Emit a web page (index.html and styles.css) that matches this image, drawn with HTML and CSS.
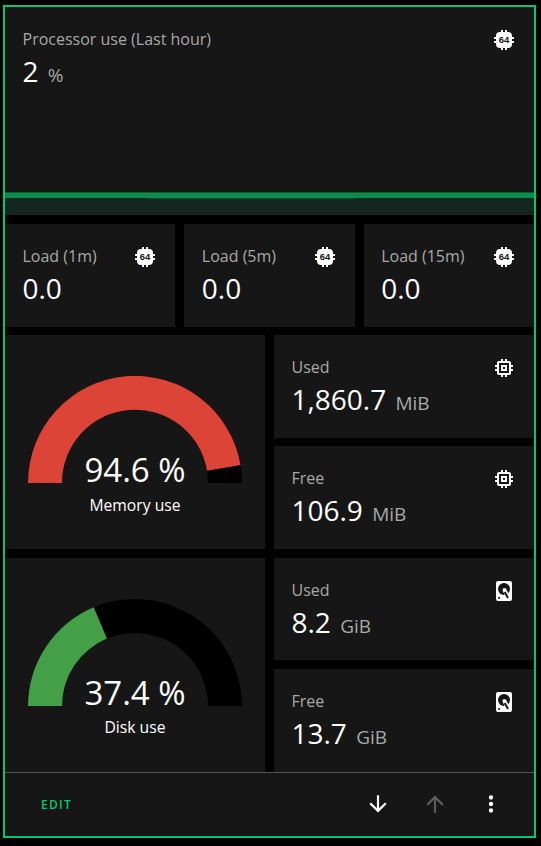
FILE: index.html
```html
<!DOCTYPE html>
<html>
<head>
  <meta charset="utf-8">
  <title>System monitor</title>
  <link rel="stylesheet" href="styles.css">
</head>
<body>
  <svg class="defs" width="0" height="0">
    <symbol id="i-memory" viewBox="0 0 24 24"><path d="M17,17H7V7H17M21,11V9H19V7C19,5.89 18.1,5 17,5H15V3H13V5H11V3H9V5H7C5.89,5 5,5.89 5,7V9H3V11H5V13H3V15H5V17A2,2 0 0,0 7,19H9V21H11V19H13V21H15V19H17A2,2 0 0,0 19,17V15H21V13H19V11M13,13H11V11H13M15,9H9V15H15V9Z"/></symbol>
    <symbol id="i-disk" viewBox="0 0 24 24">
      <path d="M6,2H18A2,2 0 0,1 20,4V20A2,2 0 0,1 18,22H6A2,2 0 0,1 4,20V4A2,2 0 0,1 6,2Z"/>
      <circle class="disk-dark" cx="12" cy="10" r="6"/>
      <path class="disk-notch" d="M12,10L16.3,19"/>
      <path class="disk-arm" d="M12.7,13L16,19"/>
      <circle cx="12" cy="10" r="1"/>
      <circle class="disk-dark" cx="7" cy="19" r="1"/>
    </symbol>
    <symbol id="i-cpu" viewBox="0 0 24 24"><path d="M9,2H11V4H13V2H15V4H16A4,4 0 0,1 20,8V9H22V11H20V13H22V15H20V16A4,4 0 0,1 16,20H15V22H13V20H11V22H9V20H8A4,4 0 0,1 4,16V15H2V13H4V11H2V9H4V8A4,4 0 0,1 8,4H9V2Z"/></symbol>
  </svg>

  <div class="panel">
    <div class="grid">
      <div class="card card-wide">
        <div class="card-head">
          <div>
            <div class="label">Processor use (Last hour)</div>
            <div class="reading">2 <span class="unit">%</span></div>
          </div>
          <svg class="icon" viewBox="0 0 24 24"><use href="#i-cpu"/><text class="cpu-text" x="12" y="15.4" textLength="10.5" lengthAdjust="spacingAndGlyphs">64</text></svg>
        </div>
        <div class="chart"><div class="chart-step"></div></div>
      </div>

      <div class="card card-third">
        <div class="card-head">
          <div>
            <div class="label">Load (1m)</div>
            <div class="reading">0.0</div>
          </div>
          <svg class="icon" viewBox="0 0 24 24"><use href="#i-cpu"/><text class="cpu-text" x="12" y="15.4" textLength="10.5" lengthAdjust="spacingAndGlyphs">64</text></svg>
        </div>
      </div>
      <div class="card card-third">
        <div class="card-head">
          <div>
            <div class="label">Load (5m)</div>
            <div class="reading">0.0</div>
          </div>
          <svg class="icon" viewBox="0 0 24 24"><use href="#i-cpu"/><text class="cpu-text" x="12" y="15.4" textLength="10.5" lengthAdjust="spacingAndGlyphs">64</text></svg>
        </div>
      </div>
      <div class="card card-third">
        <div class="card-head">
          <div>
            <div class="label">Load (15m)</div>
            <div class="reading">0.0</div>
          </div>
          <svg class="icon" viewBox="0 0 24 24"><use href="#i-cpu"/><text class="cpu-text" x="12" y="15.4" textLength="10.5" lengthAdjust="spacingAndGlyphs">64</text></svg>
        </div>
      </div>

      <div class="card card-half card-gauge">
        <div class="gauge">
          <svg class="gauge-arc" viewBox="0 0 214 107">
            <path class="arc-bg" d="M0,107A107,107 0 0,1 214,107H180A73,73 0 0,0 34,107Z"/>
            <path class="arc-red" d="M0,107A107,107 0 0,1 212.5,89L179,94.7A73,73 0 0,0 34,107Z"/>
          </svg>
          <div class="gauge-value">94.6 %</div>
        </div>
        <div class="gauge-name">Memory use</div>
      </div>
      <div class="card card-half">
        <div class="card-head">
          <div>
            <div class="label">Used</div>
            <div class="reading">1,860.7 <span class="unit">MiB</span></div>
          </div>
          <svg class="icon"><use href="#i-memory"/></svg>
        </div>
      </div>
      <div class="card card-half">
        <div class="card-head">
          <div>
            <div class="label">Free</div>
            <div class="reading">106.9 <span class="unit">MiB</span></div>
          </div>
          <svg class="icon"><use href="#i-memory"/></svg>
        </div>
      </div>

      <div class="card card-half card-gauge">
        <div class="gauge">
          <svg class="gauge-arc" viewBox="0 0 214 107">
            <path class="arc-bg" d="M0,107A107,107 0 0,1 214,107H180A73,73 0 0,0 34,107Z"/>
            <path class="arc-green" d="M0,107A107,107 0 0,1 65.7,8.3L78.9,39.6A73,73 0 0,0 34,107Z"/>
          </svg>
          <div class="gauge-value">37.4 %</div>
        </div>
        <div class="gauge-name">Disk use</div>
      </div>
      <div class="card card-half">
        <div class="card-head">
          <div>
            <div class="label">Used</div>
            <div class="reading">8.2 <span class="unit">GiB</span></div>
          </div>
          <svg class="icon"><use href="#i-disk"/></svg>
        </div>
      </div>
      <div class="card card-half">
        <div class="card-head">
          <div>
            <div class="label">Free</div>
            <div class="reading">13.7 <span class="unit">GiB</span></div>
          </div>
          <svg class="icon"><use href="#i-disk"/></svg>
        </div>
      </div>
    </div>

    <div class="footer">
      <a class="edit">EDIT</a>
      <div class="actions">
        <svg class="action" viewBox="0 0 24 24"><path d="M11,4H13V16L18.5,10.5L19.92,11.92L12,19.84L4.08,11.92L5.5,10.5L11,16V4Z"/></svg>
        <svg class="action action-off" viewBox="0 0 24 24"><path d="M13,20H11V8L5.5,13.5L4.08,12.08L12,4.16L19.92,12.08L18.5,13.5L13,8V20Z"/></svg>
        <svg class="action" viewBox="0 0 24 24"><path d="M12,16A2,2 0 0,1 14,18A2,2 0 0,1 12,20A2,2 0 0,1 10,18A2,2 0 0,1 12,16M12,10A2,2 0 0,1 14,12A2,2 0 0,1 12,14A2,2 0 0,1 10,12A2,2 0 0,1 12,10M12,4A2,2 0 0,1 14,6A2,2 0 0,1 12,8A2,2 0 0,1 10,6A2,2 0 0,1 12,4Z"/></svg>
      </div>
    </div>
  </div>
</body>
</html>
```

FILE: styles.css
```css
* {
  box-sizing: border-box;
}

html, body {
  margin: 0;
  background-color: #000;
}

body {
  font-family: "Open Sans", "Noto Sans", sans-serif;
  color: #fff;
}

.defs {
  position: absolute;
}

.panel {
  width: 533px;
  height: 833px;
  margin: 5px 0 0 3px;
  border: 2px solid #00c86c;
  background-color: #000;
}

.grid {
  display: grid;
  grid-template-columns: repeat(6, 1fr);
  grid-template-rows: 208.3px repeat(5, 102.8px);
  gap: 8.5px 9px;
}

.card {
  background-color: #161616;
}

.card-wide {
  grid-column: span 6;
  display: flex;
  flex-direction: column;
  justify-content: space-between;
}

.card-third {
  grid-column: span 2;
}

.card-half {
  grid-column: span 3;
}

.card-gauge {
  grid-row: span 2;
  padding-top: 41px;
}

.card-head {
  display: flex;
  justify-content: space-between;
  padding: 20px 18px 0 17.5px;
}

.label {
  font-size: 16px;
  line-height: 24px;
  color: #a8a8a8;
}

.reading {
  font-size: 28px;
  line-height: 40px;
  color: #fff;
}

.unit {
  font-size: 19px;
  color: #a8a8a8;
  margin-left: 2px;
}

.icon {
  width: 24px;
  height: 24px;
  margin-top: 1px;
  fill: #fff;
  flex: none;
}

.cpu-text {
  font-family: "Liberation Sans", sans-serif;
  font-size: 9.5px;
  font-weight: 700;
  text-anchor: middle;
  fill: #161616;
}

.disk-dark {
  fill: #161616;
}

.disk-notch {
  fill: none;
  stroke: #fff;
  stroke-width: 4;
}

.disk-arm {
  fill: none;
  stroke: #161616;
  stroke-width: 2;
}

.chart {
  height: 22px;
  background-color: #15261f;
  border-top: 5px solid #0e8c4c;
  box-shadow: 0 -1px 0 #0b5a34;
}

.chart-step {
  width: 210px;
  height: 1px;
  margin-left: 142px;
  background-color: #0e4a2e;
}

.gauge {
  position: relative;
  width: 214px;
  height: 107px;
  margin: 0 auto;
}

.gauge-arc {
  display: block;
  width: 214px;
  height: 107px;
}

.arc-bg {
  fill: #000;
}

.arc-red {
  fill: #db4437;
}

.arc-green {
  fill: #43a047;
}

.gauge-value {
  position: absolute;
  left: 0;
  right: 0;
  bottom: -9px;
  text-align: center;
  font-size: 33px;
  line-height: 44px;
}

.gauge-name {
  margin-top: 9.5px;
  text-align: center;
  font-size: 15.7px;
  line-height: 24px;
}

.footer {
  height: 64px;
  border-top: 1px solid #555;
  background-color: #161616;
  display: flex;
  align-items: center;
  justify-content: space-between;
  padding: 0 30px 0 36px;
}

.edit {
  font-size: 12px;
  font-weight: 600;
  letter-spacing: 1.25px;
  color: #00c86c;
}

.actions {
  display: flex;
  gap: 30.5px;
}

.action {
  width: 26px;
  height: 26px;
  fill: #fff;
}

.action-off {
  fill: #5c5c5c;
}
```
